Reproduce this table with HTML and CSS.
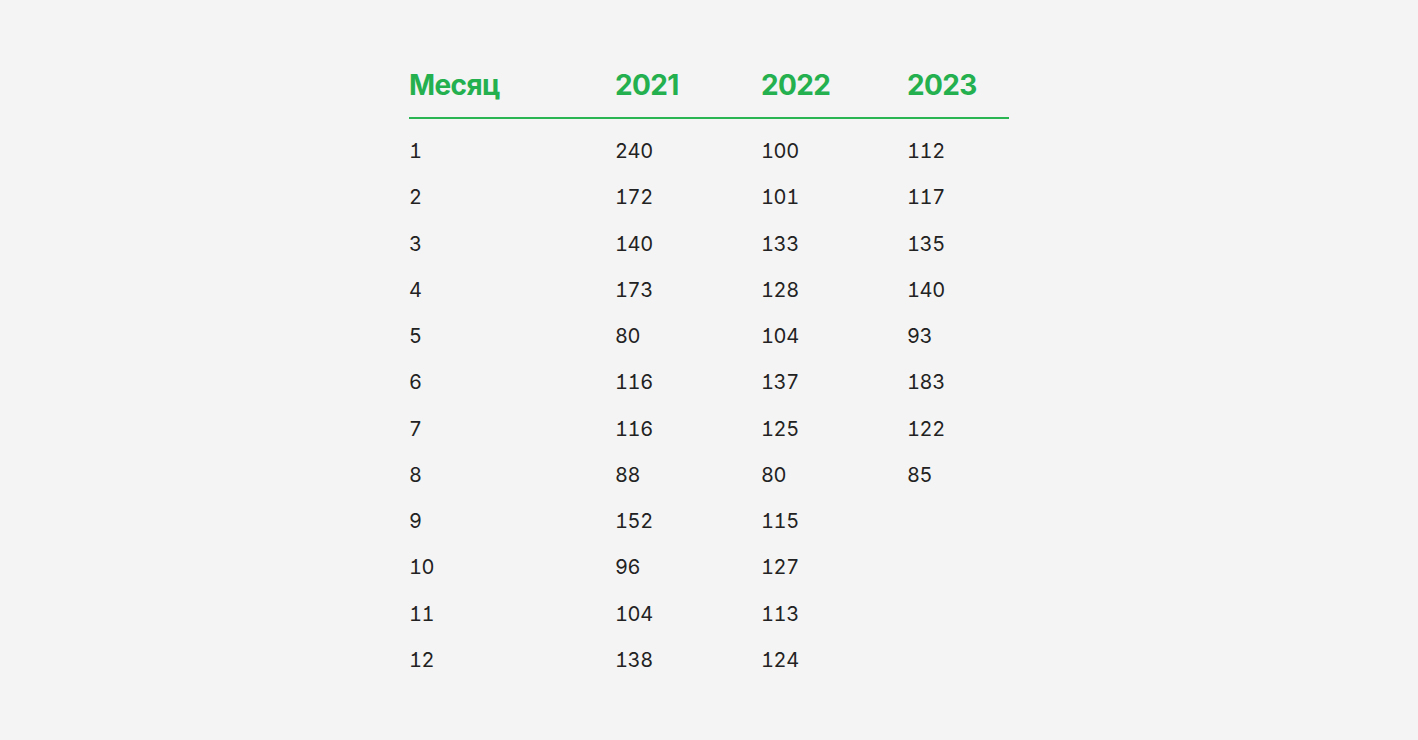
FILE: index.html
```html
<!DOCTYPE html>
<html lang="ru">
<head>
<meta charset="utf-8">
<link rel="stylesheet" href="styles.css">
<title>Таблица</title>
</head>
<body>
<div class="page">
  <div class="table">
    <div class="row head">
      <div>Месяц</div><div>2021</div><div>2022</div><div>2023</div>
    </div>
    <div class="body">
      <div class="row"><div>1</div><div>240</div><div>100</div><div>112</div></div>
      <div class="row"><div>2</div><div>172</div><div>101</div><div>117</div></div>
      <div class="row"><div>3</div><div>140</div><div>133</div><div>135</div></div>
      <div class="row"><div>4</div><div>173</div><div>128</div><div>140</div></div>
      <div class="row"><div>5</div><div>80</div><div>104</div><div>93</div></div>
      <div class="row"><div>6</div><div>116</div><div>137</div><div>183</div></div>
      <div class="row"><div>7</div><div>116</div><div>125</div><div>122</div></div>
      <div class="row"><div>8</div><div>88</div><div>80</div><div>85</div></div>
      <div class="row"><div>9</div><div>152</div><div>115</div><div></div></div>
      <div class="row"><div>10</div><div>96</div><div>127</div><div></div></div>
      <div class="row"><div>11</div><div>104</div><div>113</div><div></div></div>
      <div class="row"><div>12</div><div>138</div><div>124</div><div></div></div>
    </div>
  </div>
</div>
</body>
</html>
```
FILE: styles.css
```css
html, body {
  margin: 0;
  padding: 0;
  background: #f4f4f4;
}
.page {
  width: 1418px;
  height: 740px;
  padding-top: 69px;
  box-sizing: border-box;
  font-family: "Inter", "Noto Sans", sans-serif;
}
.table {
  width: 600px;
  margin-left: 409px;
}
.row {
  display: grid;
  grid-template-columns: 206px 146px 146px 102px;
}
.head {
  color: #24b04e;
  font-weight: 700;
  font-size: 28px;
  line-height: 33px;
  letter-spacing: -0.6px;
  padding-bottom: 15px;
  border-bottom: 2px solid #2bb552;
}
.body {
  padding-top: 9px;
  color: #222222;
  font-size: 20px;
  letter-spacing: -0.4px;
  font-variant-numeric: tabular-nums;
  font-feature-settings: "tnum" 1, "cv01" 1;
}
.body .row {
  height: 46.27px;
  line-height: 46.27px;
}
```
